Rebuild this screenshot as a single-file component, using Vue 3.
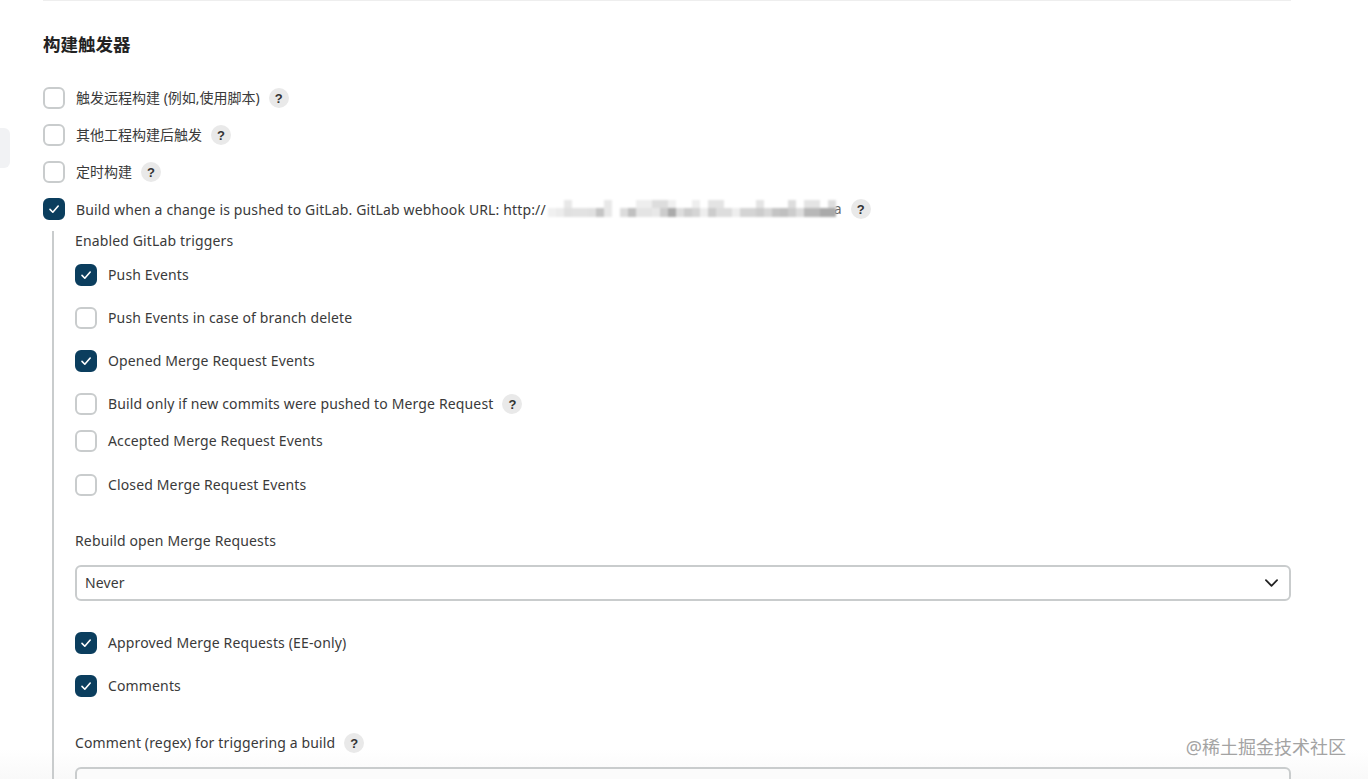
<script setup>
const topRows = [
  { label: '触发远程构建 (例如,使用脚本)', help: true },
  { label: '其他工程构建后触发', help: true },
  { label: '定时构建', help: true },
]
const triggers = [
  { label: 'Push Events', checked: true, cls: 'gap-43' },
  { label: 'Push Events in case of branch delete', checked: false, cls: 'gap-43' },
  { label: 'Opened Merge Request Events', checked: true, cls: 'gap-43' },
  { label: 'Build only if new commits were pushed to Merge Request', checked: false, help: true, cls: 'gap-37' },
  { label: 'Accepted Merge Request Events', checked: false, cls: 'gap-44' },
  { label: 'Closed Merge Request Events', checked: false, cls: '' },
]
// mosaic over the webhook url, one column per 8px: [upper, lower]
const mosaic = [
  ['#fff', '#f0f0f0'], ['#fff', '#ececec'], ['#e8e8e8', '#e0e0e0'], ['#fff', '#e2e2e2'],
  ['#fff', '#e2e2e2'], ['#fff', '#e0e0e0'], ['#fff', '#c4c4c4'], ['#e8e8e8', '#e8e8e8'],
  ['#fff', '#fff'], ['#fff', '#dcdcdc'], ['#fff', '#c0c0c0'], ['#eee', '#e4e4e4'],
  ['#eee', '#e4e4e4'], ['#ddd', '#e8e8e8'], ['#ddd', '#ccc'], ['#f0f0f0', '#aaa'],
  ['#fff', '#ddd'], ['#fff', '#ccc'], ['#eee', '#d5d5d5'], ['#fff', '#eee'],
  ['#e4e4e4', '#ccc'], ['#e4e4e4', '#ddd'], ['#fff', '#ddd'], ['#fff', '#eee'],
  ['#fff', '#d4d4d4'], ['#fff', '#d4d4d4'], ['#e4e4e4', '#ccc'], ['#fff', '#d8d8d8'],
  ['#fff', '#c4c4c4'], ['#fff', '#c0c0c0'], ['#ddd', '#ccc'], ['#fff', '#ddd'],
  ['#e4e4e4', '#b8b8b8'], ['#e4e4e4', '#b8b8b8'], ['#fff', '#aaa'], ['#ddd', '#aaa'],
]
</script>

<template>
  <div class="page">
    <div class="side-tab"></div>
    <div class="fade"></div>
    <div class="section">
      <h2 class="title">构建触发器</h2>

      <div v-for="row in topRows" :key="row.label" class="row top-row">
        <span class="box"></span>
        <span class="txt cjk">{{ row.label }}</span>
        <span class="help">?</span>
      </div>

      <div class="row top-row last">
        <span class="box on">
          <svg viewBox="0 0 22 22" width="22" height="22"><path d="M7 11.4l2.8 2.8L15.2 8" fill="none" stroke="#fff" stroke-width="1.6" stroke-linecap="round" stroke-linejoin="round"/></svg>
        </span>
        <span class="txt">Build when a change is pushed to GitLab. GitLab webhook URL: http://</span>
        <span class="masked">
          <span class="tail">a</span>
          <span class="blur">
            <span v-for="(c, i) in mosaic" :key="i" class="cell">
              <i class="up" :style="{ background: c[0] }"></i>
              <i class="down" :style="{ background: c[1] }"></i>
            </span>
          </span>
        </span>
        <span class="help">?</span>
      </div>

      <div class="nested">
        <div class="lbl first">Enabled GitLab triggers</div>

        <div v-for="t in triggers" :key="t.label" class="row" :class="t.cls">
          <span class="box" :class="{ on: t.checked }">
            <svg v-if="t.checked" viewBox="0 0 22 22" width="22" height="22"><path d="M7 11.4l2.8 2.8L15.2 8" fill="none" stroke="#fff" stroke-width="1.6" stroke-linecap="round" stroke-linejoin="round"/></svg>
          </span>
          <span class="txt">{{ t.label }}</span>
          <span v-if="t.help" class="help">?</span>
        </div>

        <div class="lbl rebuild">Rebuild open Merge Requests</div>
        <div class="select">
          <span class="select-val">Never</span>
          <svg viewBox="0 0 14 8" width="13" height="8"><path d="M1 1l6 6 6-6" fill="none" stroke="#222" stroke-width="1.9" stroke-linecap="round" stroke-linejoin="round"/></svg>
        </div>

        <div class="row gap-43 approved">
          <span class="box on">
            <svg viewBox="0 0 22 22" width="22" height="22"><path d="M7 11.4l2.8 2.8L15.2 8" fill="none" stroke="#fff" stroke-width="1.6" stroke-linecap="round" stroke-linejoin="round"/></svg>
          </span>
          <span class="txt">Approved Merge Requests (EE-only)</span>
        </div>
        <div class="row">
          <span class="box on">
            <svg viewBox="0 0 22 22" width="22" height="22"><path d="M7 11.4l2.8 2.8L15.2 8" fill="none" stroke="#fff" stroke-width="1.6" stroke-linecap="round" stroke-linejoin="round"/></svg>
          </span>
          <span class="txt">Comments</span>
        </div>

        <div class="lbl comment">
          Comment (regex) for triggering a build
          <span class="help">?</span>
        </div>
        <div class="textarea"></div>
      </div>
    </div>
    <div class="watermark">@稀土掘金技术社区</div>
  </div>
</template>

<style>
html, body {
  margin: 0;
  background: #fff;
  overflow: hidden;
}
</style>

<style scoped>
.page {
  position: relative;
  height: 779px;
  overflow: hidden;
  background: #fff;
  color: #3a3a3a;
  font-family: "Noto Sans", "Noto Sans CJK SC", sans-serif;
  font-size: 14px;
  letter-spacing: 0.14px;
  box-sizing: border-box;
  padding: 0 77px 0 43px;
}
.section {
  position: relative;
  border-top: 1px solid #eee;
}
.title {
  margin: 31px 0 0;
  height: 24px;
  line-height: 24px;
  font-size: 17.5px;
  font-weight: 700;
  letter-spacing: 0;
  color: #222;
}
.row {
  display: flex;
  align-items: center;
  height: 22px;
}
.top-row {
  margin-bottom: 15px;
}
.title + .top-row {
  margin-top: 31px;
}
.top-row.last {
  margin-bottom: 0;
}
.box {
  flex: none;
  width: 22px;
  height: 22px;
  box-sizing: border-box;
  border: 2px solid #c9cccd;
  border-radius: 6px;
  background: #fff;
  position: relative;
}
.box.on {
  background: #0b3e5e;
  border-color: #0b3e5e;
}
.box svg {
  position: absolute;
  left: -2px;
  top: -2px;
}
.txt {
  margin-left: 11px;
  white-space: nowrap;
}
.txt.cjk {
  margin-top: -2px;
  letter-spacing: 0;
}
.nested .txt,
.select-val {
  margin-top: -2px;
}
.help {
  flex: none;
  display: inline-flex;
  align-items: center;
  justify-content: center;
  width: 20px;
  height: 20px;
  margin-left: 9px;
  border-radius: 50%;
  background: #e9e9e9;
  color: #333;
  font-family: "Liberation Sans", sans-serif;
  font-size: 13px;
  font-weight: 700;
}
.masked {
  flex: none;
  position: relative;
  width: 296px;
  height: 22px;
}
.tail {
  position: absolute;
  right: 0;
  top: 1px;
  color: #666;
}
.blur {
  position: absolute;
  left: 2px;
  top: 2px;
  display: flex;
  filter: blur(1px);
}
.cell {
  display: block;
  flex: none;
  width: 8px;
}
.cell i {
  display: block;
}
.cell .up {
  height: 8px;
}
.cell .down {
  height: 9px;
}
.nested {
  margin-left: 9px;
  margin-top: 11px;
  padding-left: 21px;
  border-left: 2px solid #c9cccd;
}
.lbl {
  display: flex;
  align-items: center;
  height: 20px;
  box-sizing: border-box;
  padding-bottom: 2px;
  white-space: nowrap;
}
.lbl .help {
  margin-top: 2px;
}
.lbl.first {
  margin-bottom: 13px;
}
.gap-43 {
  margin-bottom: 21px;
}
.gap-37 {
  margin-bottom: 15px;
}
.gap-44 {
  margin-bottom: 22px;
}
.lbl.rebuild {
  margin-top: 35px;
  margin-bottom: 14px;
}
.select {
  display: flex;
  align-items: center;
  justify-content: space-between;
  height: 36px;
  box-sizing: border-box;
  border: 2px solid #c9cccd;
  border-radius: 6px;
  padding: 0 11px 0 8px;
  background: #fff;
}
.approved {
  margin-top: 31px;
}
.lbl.comment {
  margin-top: 36px;
  margin-bottom: 14px;
}
.textarea {
  height: 60px;
  box-sizing: border-box;
  border: 2px solid #c9cccd;
  border-radius: 6px;
  background: #fbfbfb;
}
.side-tab {
  position: absolute;
  left: -12px;
  top: 128px;
  width: 22px;
  height: 40px;
  border-radius: 6px;
  background: #f1f2f4;
}
.fade {
  position: absolute;
  left: 0;
  bottom: 0;
  width: 100%;
  height: 30px;
  background: linear-gradient(to bottom, rgba(244, 244, 244, 0), rgba(244, 244, 244, 0.55));
  pointer-events: none;
}
.watermark {
  position: absolute;
  right: 22px;
  top: 736px;
  font-size: 18px;
  line-height: 22px;
  letter-spacing: 0;
  color: #a3a3a3;
  white-space: nowrap;
}
</style>
